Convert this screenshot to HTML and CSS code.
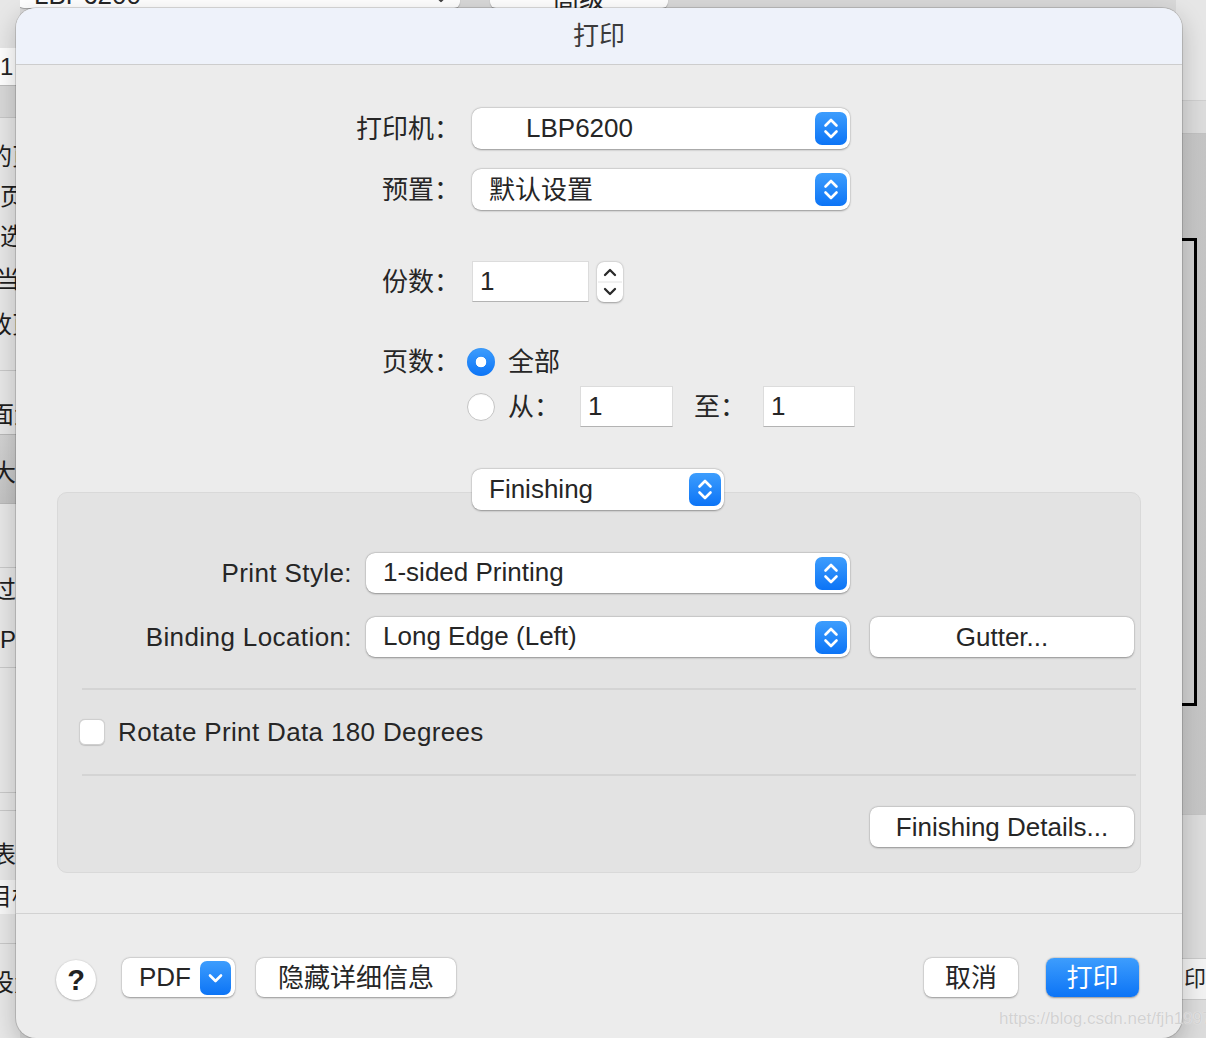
FILE: index.html
```html
<!DOCTYPE html>
<html>
<head>
    <meta charset="utf-8">
    <title>打印</title>
    <link rel="stylesheet" href="styles.css">
</head>
<body>
    <!-- window behind the sheet -->
    <div class="backdrop">
        <div class="bg-popup"><span>LBP6200</span>
            <svg class="bg-chev" width="14" height="10" viewBox="0 0 14 10"><path d="M2 2 L7 7 L12 2" fill="none" stroke="#444" stroke-width="2.2" stroke-linecap="round" stroke-linejoin="round"/></svg>
        </div>
        <div class="bg-button">高级</div>

        <div class="bg-left">
            <div class="bg-field">1</div>
            <div class="bg-band"></div>
            <div class="bg-txt" style="top:141px;left:-12px">的页</div>
            <div class="bg-txt" style="top:181px;left:0">页</div>
            <div class="bg-txt" style="top:221px;left:0">选</div>
            <div class="bg-txt" style="top:264px;left:-4px">当前</div>
            <div class="bg-txt" style="top:309px;left:-12px">改页</div>
            <div class="bg-line" style="top:370px"></div>
            <div class="bg-txt" style="top:399px;left:-10px">面大</div>
            <div class="bg-dark"></div>
            <div class="bg-txt" style="top:457px;left:-8px">大小</div>
            <div class="bg-line" style="top:567px"></div>
            <div class="bg-txt" style="top:574px;left:-8px">过</div>
            <div class="bg-txt" style="top:624px;left:0">P</div>
            <div class="bg-line" style="top:667px"></div>
            <div class="bg-line" style="top:792px"></div>
            <div class="bg-line" style="top:810px"></div>
            <div class="bg-txt" style="top:839px;left:-8px">表单</div>
            <div class="bg-white"></div>
            <div class="bg-txt" style="top:881px;left:-12px">目标</div>
            <div class="bg-line" style="top:943px"></div>
            <div class="bg-txt" style="top:967px;left:-10px">设置</div>
        </div>

        <div class="bg-right">
            <div class="bg-r-top"></div>
            <div class="bg-r-band"></div>
            <div class="bg-bracket"></div>
            <div class="bg-r-low"></div>
            <div class="bg-r-print">印</div>
        </div>
    </div>

    <div class="sheet">
        <div class="titlebar"><span>打印</span></div>

        <div class="content">
            <div class="form">
                <div class="row">
                    <span class="lbl">打印机：</span>
                    <div class="popup w-main">
                        <span class="val printer-name">LBP6200</span>
                        <span class="arrows"><svg width="32" height="33" viewBox="0 0 32 33"><path d="M10.5 13.5 L16 8 L21.5 13.5 M10.5 19.5 L16 25 L21.5 19.5" fill="none" stroke="#fff" stroke-width="2.6" stroke-linecap="round" stroke-linejoin="round"/></svg></span>
                    </div>
                </div>
                <div class="row r-preset">
                    <span class="lbl">预置：</span>
                    <div class="popup w-main">
                        <span class="val cjk">默认设置</span>
                        <span class="arrows"><svg width="32" height="33" viewBox="0 0 32 33"><path d="M10.5 13.5 L16 8 L21.5 13.5 M10.5 19.5 L16 25 L21.5 19.5" fill="none" stroke="#fff" stroke-width="2.6" stroke-linecap="round" stroke-linejoin="round"/></svg></span>
                    </div>
                </div>
                <div class="row r-copies">
                    <span class="lbl">份数：</span>
                    <div class="field f-copies">1</div>
                    <div class="stepper">
                        <svg width="26" height="40" viewBox="0 0 26 40"><path d="M8 13 L13 8 L18 13 M8 27 L13 32 L18 27" fill="none" stroke="#2a2a2a" stroke-width="2.3" stroke-linecap="round" stroke-linejoin="round"/><line x1="1" y1="20" x2="25" y2="20" stroke="#e2e2e2" stroke-width="1"/></svg>
                    </div>
                </div>
                <div class="row r-pages">
                    <span class="lbl">页数：</span>
                    <span class="radio on"></span>
                    <span class="opt">全部</span>
                </div>
                <div class="row r-range">
                    <span class="lbl"></span>
                    <span class="radio"></span>
                    <span class="opt">从：</span>
                    <div class="field f-from">1</div>
                    <span class="opt to">至：</span>
                    <div class="field f-to">1</div>
                </div>
            </div>

            <div class="pane-switch">
                <div class="popup w-pane">
                    <span class="val">Finishing</span>
                    <span class="arrows"><svg width="32" height="33" viewBox="0 0 32 33"><path d="M10.5 13.5 L16 8 L21.5 13.5 M10.5 19.5 L16 25 L21.5 19.5" fill="none" stroke="#fff" stroke-width="2.6" stroke-linecap="round" stroke-linejoin="round"/></svg></span>
                </div>
            </div>

            <div class="panel">
                <div class="prow">
                    <span class="plbl">Print Style:</span>
                    <div class="popup w-panel">
                        <span class="val">1-sided Printing</span>
                        <span class="arrows"><svg width="32" height="33" viewBox="0 0 32 33"><path d="M10.5 13.5 L16 8 L21.5 13.5 M10.5 19.5 L16 25 L21.5 19.5" fill="none" stroke="#fff" stroke-width="2.6" stroke-linecap="round" stroke-linejoin="round"/></svg></span>
                    </div>
                </div>
                <div class="prow r-binding">
                    <span class="plbl">Binding Location:</span>
                    <div class="popup w-panel">
                        <span class="val">Long Edge (Left)</span>
                        <span class="arrows"><svg width="32" height="33" viewBox="0 0 32 33"><path d="M10.5 13.5 L16 8 L21.5 13.5 M10.5 19.5 L16 25 L21.5 19.5" fill="none" stroke="#fff" stroke-width="2.6" stroke-linecap="round" stroke-linejoin="round"/></svg></span>
                    </div>
                    <div class="btn w-side gutter">Gutter...</div>
                </div>
                <div class="sep"></div>
                <div class="check-row">
                    <span class="checkbox"></span>
                    <span class="check-lbl">Rotate Print Data 180 Degrees</span>
                </div>
                <div class="sep"></div>
                <div class="details-row">
                    <div class="btn w-side">Finishing Details...</div>
                </div>
            </div>
        </div>

        <div class="footer">
            <div class="help">?</div>
            <div class="btn pdf">
                <span>PDF</span>
                <span class="pdf-arrow"><svg width="31" height="34" viewBox="0 0 31 34"><path d="M10 14.5 L15.5 20 L21 14.5" fill="none" stroke="#fff" stroke-width="2.6" stroke-linecap="round" stroke-linejoin="round"/></svg></span>
            </div>
            <div class="btn hide-details"><span class="cjk">隐藏详细信息</span></div>
            <div class="spacer"></div>
            <div class="btn cancel"><span class="cjk">取消</span></div>
            <div class="btn print"><span class="cjk">打印</span></div>
        </div>
    </div>

    <div class="watermark">https://blog.csdn.net/fjh1997</div>
</body>
</html>
```

FILE: styles.css
```css
body {
    margin: 0;
    width: 1206px;
    height: 1038px;
    overflow: hidden;
    position: relative;
    font-family: "Liberation Sans", "Noto Sans CJK SC", sans-serif;
    font-size: 26px;
    color: #262626;
    background: #dadada;
}

/* ---- window behind ---- */
.backdrop {
    position: absolute;
    left: 0;
    top: 0;
    width: 1206px;
    height: 1038px;
    background: #d9d9d9;
}
.bg-popup {
    position: absolute;
    left: 18px;
    top: -30px;
    width: 442px;
    height: 38px;
    background: #fff;
    border-radius: 0 0 6px 6px;
    box-shadow: 0 1px 1px rgba(0,0,0,0.25);
    font-size: 26px;
}
.bg-popup span {
    position: absolute;
    left: 16px;
    top: 10px;
}
.bg-chev {
    position: absolute;
    right: 12px;
    top: 24px;
}
.bg-button {
    position: absolute;
    left: 490px;
    top: -30px;
    width: 178px;
    height: 38px;
    background: #fff;
    border-radius: 0 0 6px 6px;
    box-shadow: 0 1px 1px rgba(0,0,0,0.25);
    text-align: center;
    line-height: 58px;
}
.bg-left {
    position: absolute;
    left: 0;
    top: 0;
    width: 20px;
    height: 1038px;
    background: #e7e7e7;
    overflow: hidden;
}
.bg-field {
    position: absolute;
    left: 0;
    top: 48px;
    width: 20px;
    height: 37px;
    background: #fff;
    border-bottom: 1px solid #bdbdbd;
    font-size: 24px;
    line-height: 37px;
}
.bg-band {
    position: absolute;
    left: 0;
    top: 86px;
    width: 20px;
    height: 31px;
    background: #d8d8d8;
    border-bottom: 1px solid #c6c6c6;
}
.bg-dark {
    position: absolute;
    left: 0;
    top: 434px;
    width: 20px;
    height: 68px;
    background: linear-gradient(#d2d2d2, #c3c3c3);
    border-top: 1px solid #b8b8b8;
    border-bottom: 1px solid #b8b8b8;
}
.bg-white {
    position: absolute;
    left: 0;
    top: 880px;
    width: 20px;
    height: 34px;
    background: #f7f7f7;
}
.bg-line {
    position: absolute;
    left: 0;
    width: 20px;
    height: 1px;
    background: #c8c8c8;
}
.bg-txt {
    position: absolute;
    font-size: 24px;
    line-height: 32px;
    white-space: nowrap;
    color: #1e1e1e;
}
.bg-right {
    position: absolute;
    left: 1176px;
    top: 0;
    width: 30px;
    height: 1038px;
    background: linear-gradient(90deg, #cdcdcd, #c4c4c4);
}
.bg-r-top {
    height: 100px;
    background: #e6e6e6;
    border-bottom: 1px solid #cfcfcf;
}
.bg-r-band {
    height: 32px;
    background: #dcdcdc;
    border-bottom: 1px solid #c2c2c2;
}
.bg-bracket {
    position: absolute;
    left: 0;
    top: 238px;
    width: 18px;
    height: 462px;
    border: 3px solid #000;
    border-left: none;
    background: #d2d2d2;
}
.bg-r-low {
    position: absolute;
    left: 0;
    top: 814px;
    width: 30px;
    height: 224px;
    background: #dcdcdc;
    border-top: 1px solid #c4c4c4;
}
.bg-r-print {
    position: absolute;
    left: 0;
    top: 958px;
    width: 30px;
    height: 42px;
    background: #f2f2f2;
    border-top: 1px solid #c9c9c9;
    border-bottom: 1px solid #c9c9c9;
    font-size: 22px;
    line-height: 40px;
    padding-left: 8px;
    box-sizing: border-box;
}

/* ---- print sheet ---- */
.sheet {
    position: absolute;
    left: 16px;
    top: 8px;
    width: 1166px;
    height: 1030px;
    background: #ececec;
    border-radius: 20px;
    overflow: hidden;
    box-shadow: 0 0 0 1px rgba(0,0,0,0.14), 0 8px 24px rgba(0,0,0,0.22);
}
.titlebar {
    height: 57px;
    box-sizing: border-box;
    padding-bottom: 6px;
    background: #eef2fa;
    border-bottom: 1px solid #cdcdcd;
    display: flex;
    align-items: center;
    justify-content: center;
    color: #3b3b3b;
    font-size: 26px;
}
.content {
    padding-top: 43px;
}
.row {
    display: flex;
    align-items: center;
}
.lbl {
    flex: none;
    width: 444px;
    margin-right: 12px;
    line-height: 30px;
    text-align: right;
}
.r-preset {
    margin-top: 20px;
}
.r-copies {
    margin-top: 51px;
}
.r-pages {
    margin-top: 45px;
    height: 30px;
}
.r-range {
    margin-top: 9px;
}

.popup {
    flex: none;
    height: 41px;
    box-sizing: border-box;
    background: #fff;
    border-radius: 9px;
    box-shadow: 0 0.5px 2px rgba(0,0,0,0.35), 0 0 0 0.5px rgba(0,0,0,0.06);
    display: flex;
    align-items: center;
    padding-left: 17px;
    padding-right: 3px;
}
.popup .val {
    white-space: nowrap;
    line-height: 30px;
    padding-bottom: 2px;
}
.cjk {
    line-height: 30px;
}
.popup .val.cjk {
    padding-bottom: 0;
}
.printer-name {
    padding-left: 37px;
}
.arrows {
    margin-left: auto;
    width: 32px;
    height: 33px;
    border-radius: 7px;
    background: linear-gradient(#3d9dfd, #0c74f6);
    display: flex;
}
.w-main {
    width: 378px;
}
.w-pane {
    width: 252px;
}
.w-panel {
    width: 484px;
    height: 40px;
}

.field {
    flex: none;
    height: 41px;
    box-sizing: border-box;
    background: #fff;
    border: 1px solid #dcdcdc;
    border-bottom-color: #b3b3b3;
    padding-left: 7px;
    display: flex;
    align-items: center;
}
.f-copies {
    width: 117px;
}
.f-from {
    width: 93px;
    margin-left: 20px;
}
.f-to {
    width: 92px;
}
.stepper {
    flex: none;
    margin-left: 8px;
    width: 26px;
    height: 40px;
    background: #fff;
    border-radius: 7px;
    box-shadow: 0 0.5px 2px rgba(0,0,0,0.35);
    display: flex;
}

.radio {
    flex: none;
    width: 28px;
    height: 28px;
    box-sizing: border-box;
    margin-left: -5px;
    border-radius: 50%;
    background: #fff;
    border: 1px solid #c4c4c4;
    box-shadow: inset 0 1px 1px rgba(0,0,0,0.04);
}
.radio.on {
    border: none;
    background: radial-gradient(circle, #fff 0 5px, transparent 5.6px), linear-gradient(#3d9dfd, #0c74f6);
}
.opt {
    margin-left: 13px;
    line-height: 30px;
    white-space: nowrap;
}
.opt.to {
    margin-left: 21px;
    width: 69px;
}

.pane-switch {
    margin-top: 42px;
    padding-left: 456px;
    position: relative;
    z-index: 1;
}

.panel {
    margin: -18px 41px 0;
    height: 381px;
    box-sizing: border-box;
    background: #e3e3e3;
    border: 1px solid #d9d9d9;
    border-radius: 10px;
    padding-top: 60px;
}
.prow {
    display: flex;
    align-items: center;
}
.plbl {
    flex: none;
    width: 294px;
    margin-right: 14px;
    text-align: right;
    white-space: nowrap;
    letter-spacing: 0.4px;
}
.r-binding {
    margin-top: 24px;
}
.btn {
    flex: none;
    height: 40px;
    box-sizing: border-box;
    background: #fff;
    border-radius: 8px;
    box-shadow: 0 0.5px 2px rgba(0,0,0,0.35), 0 0 0 0.5px rgba(0,0,0,0.06);
    display: flex;
    align-items: center;
    justify-content: center;
    white-space: nowrap;
}
.w-side {
    width: 264px;
}
.gutter {
    margin-left: 20px;
}
.sep {
    height: 2px;
    background: #d4d4d4;
    margin: 31px 4px 0 24px;
}
.check-row {
    display: flex;
    align-items: center;
    height: 26px;
    margin: 29px 0;
    padding-left: 21px;
}
.checkbox {
    flex: none;
    width: 26px;
    height: 26px;
    box-sizing: border-box;
    background: #fff;
    border-radius: 6px;
    border: 1px solid #cfcfcf;
    box-shadow: 0 0.5px 1px rgba(0,0,0,0.15);
}
.check-lbl {
    margin-left: 13px;
    white-space: nowrap;
    letter-spacing: 0.35px;
}
.check-row + .sep {
    margin-top: 0;
}
.details-row {
    display: flex;
    justify-content: flex-end;
    margin-top: 31px;
    padding-right: 6px;
}

.footer {
    margin-top: 40px;
    border-top: 1px solid #d2d2d2;
    padding: 44px 43px 0 40px;
    display: flex;
    align-items: flex-start;
}
.help {
    flex: none;
    width: 40px;
    height: 40px;
    margin-top: 2px;
    border-radius: 50%;
    background: #fff;
    box-shadow: 0 0.5px 2px rgba(0,0,0,0.35);
    display: flex;
    align-items: center;
    justify-content: center;
    font-size: 29px;
    font-weight: bold;
    color: #222;
}
.pdf {
    margin-left: 26px;
    width: 113px;
    height: 39px;
    justify-content: flex-start;
    padding-left: 17px;
    padding-right: 4px;
}
.pdf-arrow {
    margin-left: auto;
    width: 31px;
    height: 34px;
    border-radius: 7px;
    background: linear-gradient(#3d9dfd, #0c74f6);
    display: flex;
}
.hide-details {
    margin-left: 21px;
    width: 200px;
    height: 39px;
}
.spacer {
    flex: 1;
}
.cancel {
    width: 94px;
    height: 39px;
}
.print {
    margin-left: 28px;
    width: 93px;
    height: 39px;
    background: linear-gradient(#3d9dfd, #0c74f6);
    color: #fff;
}

.watermark {
    position: absolute;
    left: 999px;
    top: 1009px;
    font-size: 17px;
    color: #d2d2d2;
    text-shadow: 0 0 1px rgba(255,255,255,0.8);
    white-space: nowrap;
}
```
